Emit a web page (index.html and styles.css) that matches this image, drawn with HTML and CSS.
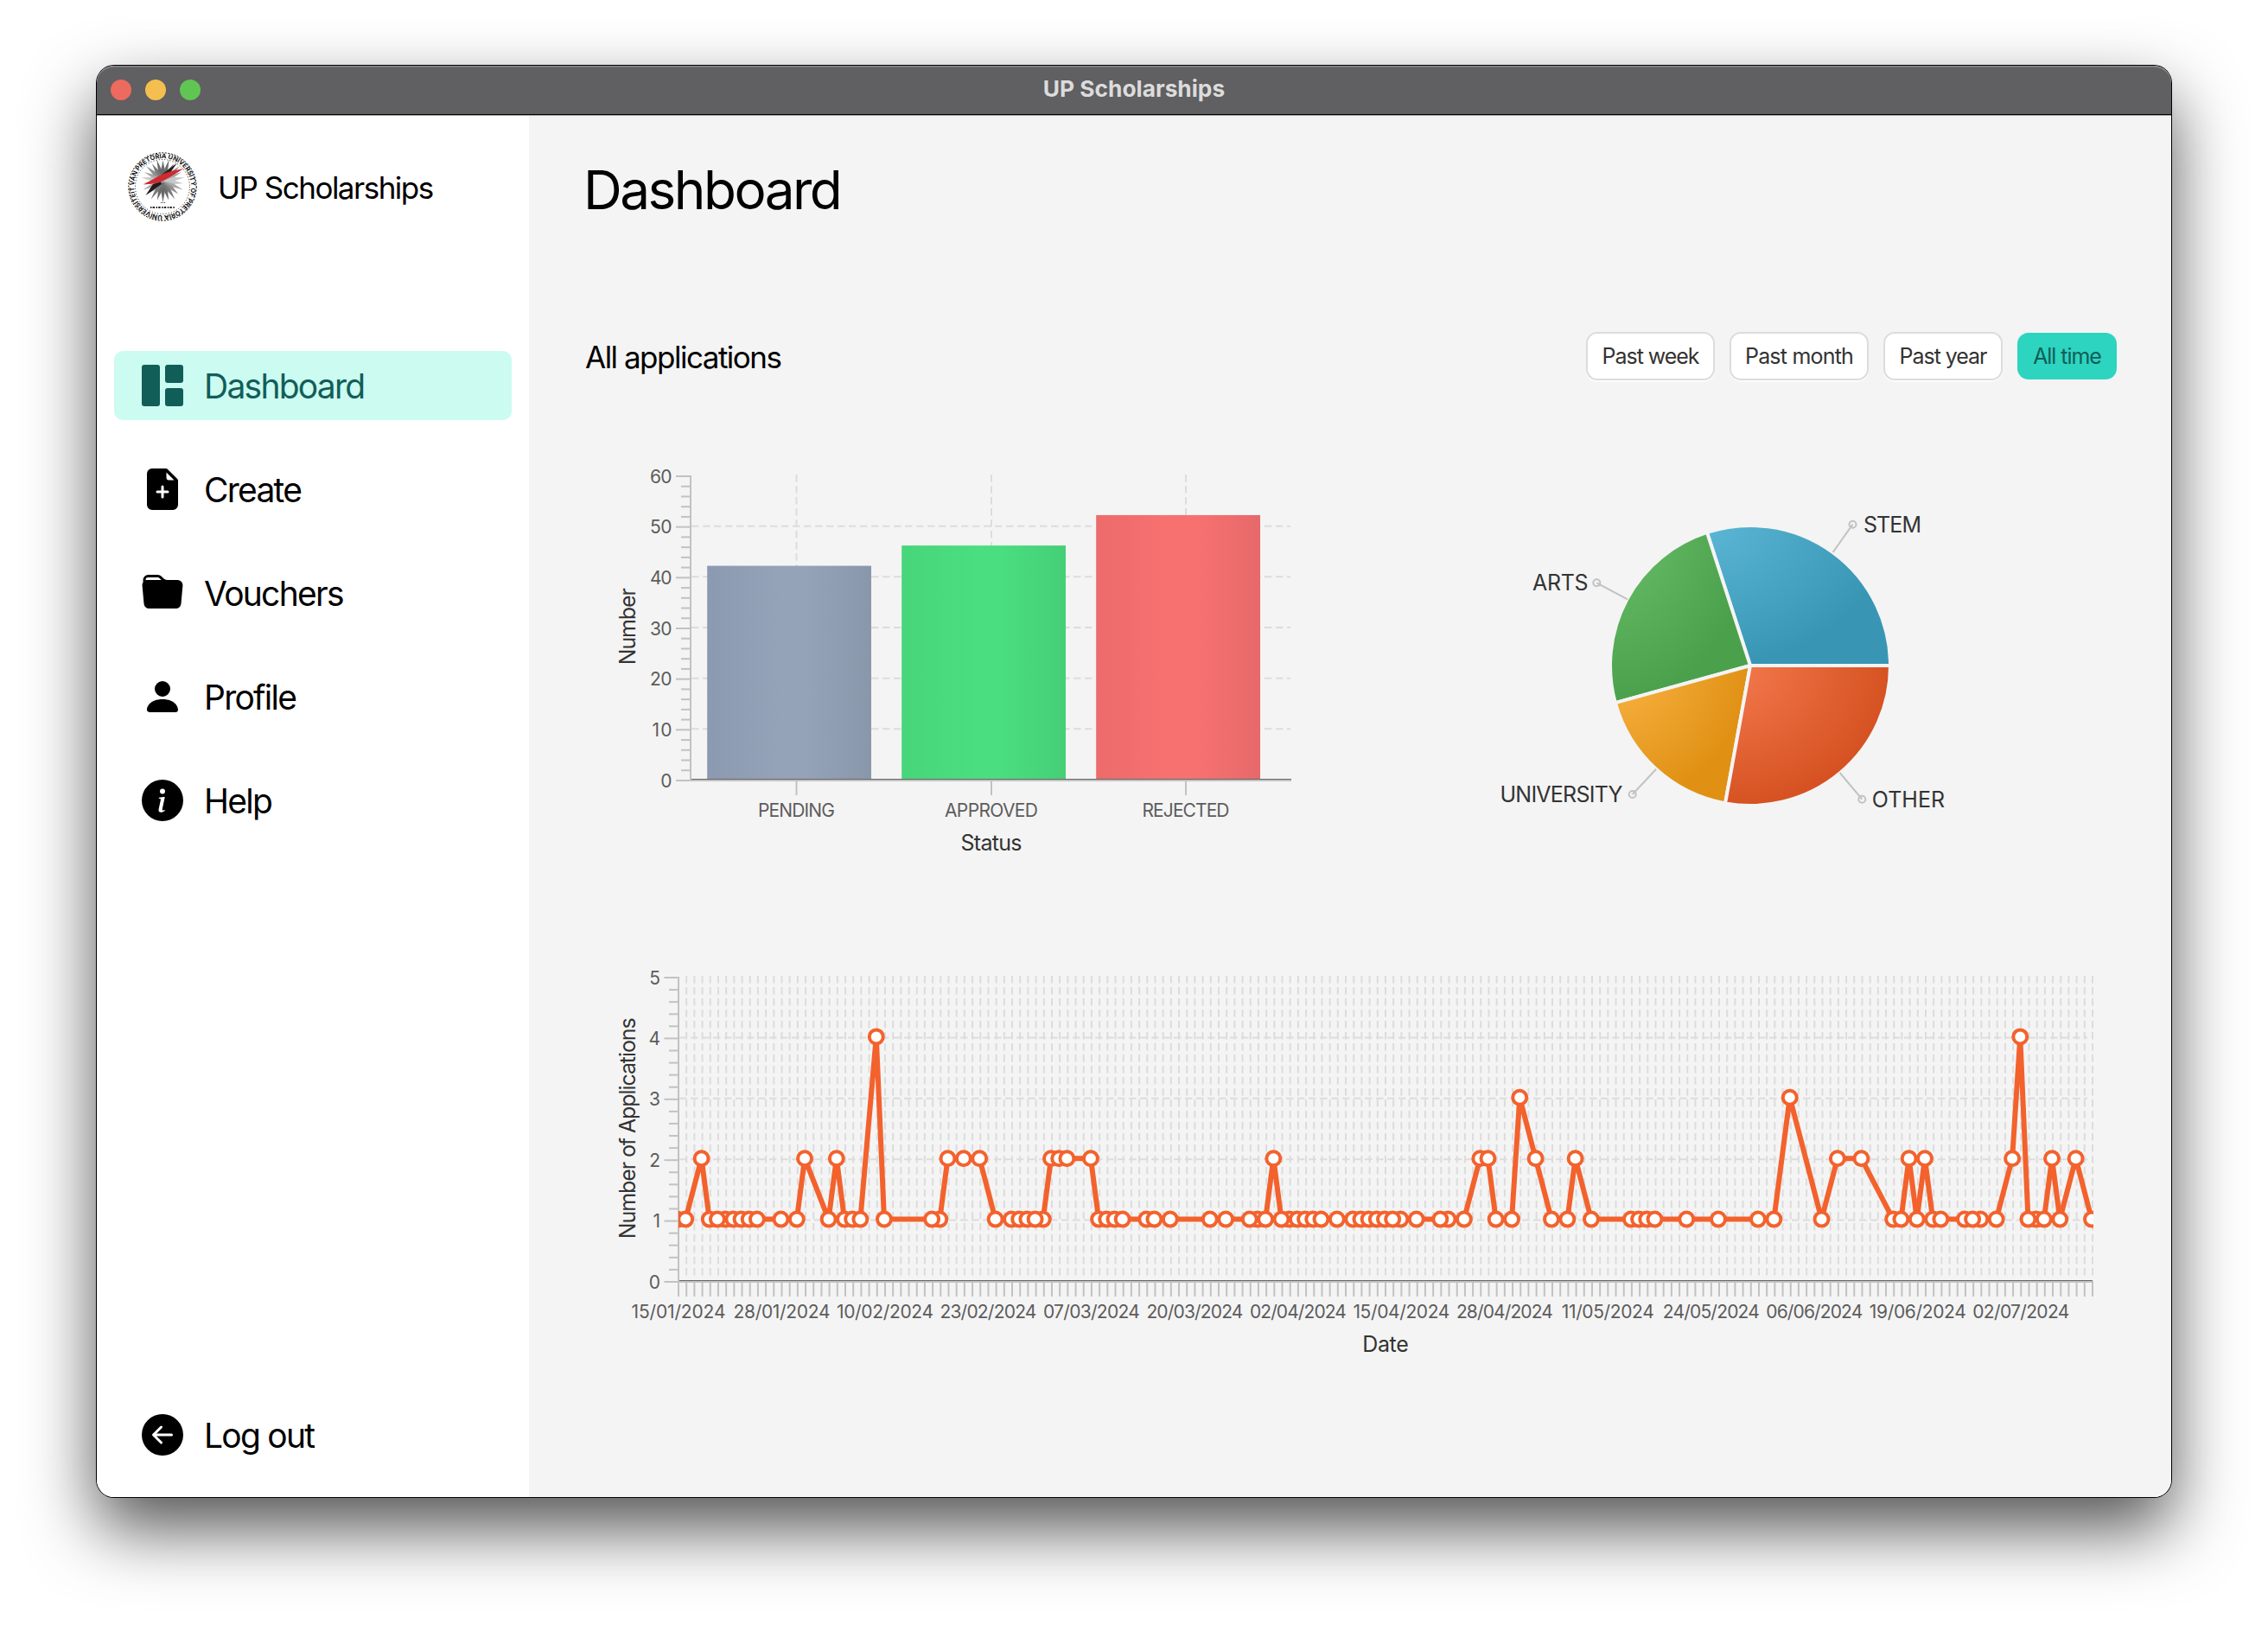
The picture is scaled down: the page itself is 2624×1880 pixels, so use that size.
FILE: index.html
```html
<!DOCTYPE html>
<html lang="en">
<head>
<meta charset="utf-8">
<title>UP Scholarships</title>
<link rel="stylesheet" href="styles.css">
</head>
<body>
<div class="window">
  <header class="titlebar">
    <div class="lights"><i class="light close"></i><i class="light minimise"></i><i class="light zoom"></i></div>
    <span class="window-title">UP Scholarships</span>
  </header>
  <div class="body">
    <aside class="sidebar">
      <div class="brand">
        <svg class="logo" viewBox="0 0 80 80" id="logo">
          <defs><path id="ring" d="M40 73A33 33 0 1 1 40.1 73"/></defs>
          <circle cx="40" cy="40" r="39.2" fill="none" stroke="#000" stroke-width="1" stroke-dasharray="2 1.6"/>
          <circle cx="40" cy="40" r="31.5" fill="none" stroke="#000" stroke-width=".9" stroke-dasharray="1 2.2"/>
          <text class="seal"><textPath href="#ring" textLength="205">UNIVERSITEIT VAN PRETORIA UNIVERSITY OF PRETORIA</textPath></text>
          <g id="rays"></g>
          <path fill="#231a1a" d="M57 12.500L48 25L40 28L39 26ZM20.500 50L29 37L38 34L39 37Z"/>
          <path fill="#cf2a30" d="M18 37.500L35 28Q44 22.500 64.500 19Q52 27 45 31Q37 36.500 18 37.500Z"/>
          <path stroke="#222" stroke-width="1.8" stroke-dasharray="1.4 1.2 2.4 1.6" d="M26 64H55"/>
          <path stroke="#333" stroke-width="1.2" stroke-dasharray="1 1" d="M38 58.500H44"/>
        </svg>
        <span class="brand-name">UP Scholarships</span>
      </div>
      <nav class="nav">
        <a class="item active"><svg class="icon" viewBox="0 0 16 16"><rect width="7" height="16" rx="1"/><rect x="9" width="7" height="7" rx="1"/><rect x="9" y="9" width="7" height="7" rx="1"/></svg>Dashboard</a>
        <a class="item"><svg class="icon" viewBox="0 0 16 16"><path d="M9.293 0H4a2 2 0 0 0-2 2v12a2 2 0 0 0 2 2h8a2 2 0 0 0 2-2V4.707A1 1 0 0 0 13.707 4L10 .293A1 1 0 0 0 9.293 0zM9.5 3.5v-2l3 3h-2a1 1 0 0 1-1-1zM8.5 7v1.5H10a.5.5 0 0 1 0 1H8.5V11a.5.5 0 0 1-1 0V9.5H6a.5.5 0 0 1 0-1h1.500V7a.5.5 0 0 1 1 0z"/></svg>Create</a>
        <a class="item"><svg class="icon" viewBox="0 0 16 16"><path d="M9.828 3h3.982a2 2 0 0 1 1.992 2.181l-.637 7A2 2 0 0 1 13.174 14H2.825a2 2 0 0 1-1.991-1.819l-.637-7a1.990 1.990 0 0 1 .342-1.310L.5 3a2 2 0 0 1 2-2h3.672a2 2 0 0 1 1.414.586l.828.828A2 2 0 0 0 9.828 3zm-8.322.12C1.720 3.042 1.950 3 2.190 3h5.396l-.707-.707A1 1 0 0 0 6.172 2H2.500a1 1 0 0 0-1 .981l.006.139z"/></svg>Vouchers</a>
        <a class="item"><svg class="icon" viewBox="0 0 16 16"><path d="M3 14s-1 0-1-1 1-4 6-4 6 3 6 4-1 1-1 1H3zm5-6a3 3 0 1 0 0-6 3 3 0 0 0 0 6z"/></svg>Profile</a>
        <a class="item"><svg class="icon" viewBox="0 0 16 16"><path d="M8 16A8 8 0 1 0 8 0a8 8 0 0 0 0 16zm.93-9.412-1 4.705c-.07.34.029.533.304.533.194 0 .487-.07.686-.246l-.088.416c-.287.346-.92.598-1.465.598-.703 0-1.002-.422-.808-1.319l.738-3.468c.064-.293.006-.399-.287-.47l-.451-.081.082-.381 2.290-.287zM8 5.500a1 1 0 1 1 0-2 1 1 0 0 1 0 2z"/></svg>Help</a>
      </nav>
      <a class="item logout"><svg class="icon" viewBox="0 0 16 16"><path d="M8 0a8 8 0 1 0 0 16A8 8 0 0 0 8 0zm3.500 7.500a.5.5 0 0 1 0 1H5.707l2.147 2.146a.5.5 0 0 1-.708.708l-3-3a.5.5 0 0 1 0-.708l3-3a.5.5 0 1 1 .708.708L5.707 7.500H11.500z"/></svg>Log out</a>
    </aside>
    <main class="main">
      <h1 class="page-title">Dashboard</h1>
      <div class="toolbar">
        <h2 class="section-title">All applications</h2>
        <div class="ranges">
          <button class="range week">Past week</button>
          <button class="range month">Past month</button>
          <button class="range year">Past year</button>
          <button class="range all">All time</button>
        </div>
      </div>
      <div class="charts">
        <svg class="bar-chart" id="bars" viewBox="700 530 820 480"></svg>
        <svg class="pie-chart" id="pie" viewBox="1720 530 550 480"></svg>
      </div>
      <svg class="line-chart" id="line" viewBox="700 1110 1760 480"></svg>
    </main>
  </div>
</div>
<script src="charts.js"></script>
</body>
</html>
```
FILE: styles.css
```css
* { box-sizing: border-box; }
html, body { margin: 0; }
body {
  width: 2624px;
  height: 1880px;
  padding: 76px 112px 0;
  overflow: hidden;
  background: #fff;
  font-family: Inter, "Liberation Sans", sans-serif;
  color: #000;
}
.window {
  display: flex;
  flex-direction: column;
  width: 2400px;
  height: 1656px;
  border-radius: 20px;
  background: #fff;
  box-shadow: 0 0 0 1px #000, 0 36px 80px rgba(0, 0, 0, .68);
}
.titlebar {
  display: grid;
  grid-template-columns: 1fr auto 1fr;
  align-items: center;
  height: 58px;
  padding: 0 16px 2px;
  border-radius: 20px 20px 0 0;
  background: #605f61;
  box-shadow: inset 0 2px 0 -0.5px #8b8b8c, inset 0 -1px 0 #a0a0a0, inset 0 -2px 0 #000;
}
.lights { display: flex; gap: 16px; }
.light { width: 24px; height: 24px; border-radius: 50%; }
.close { background: #ed6a5e; }
.minimise { background: #f5bf4f; }
.zoom { background: #61c554; }
.window-title { font-size: 26.3px; font-weight: 700; line-height: 52px; padding-bottom: 3px; color: #dcdcdc; }
.body { display: flex; flex: 1; }
.sidebar {
  display: flex;
  flex: none;
  flex-direction: column;
  width: 500px;
  padding: 42px 20px 32px;
  border-radius: 0 0 0 20px;
  background: #fff;
}
.brand { display: flex; align-items: center; gap: 24px; height: 80px; padding-left: 16px; }
.logo { width: 80px; height: 80px; }
.seal { font-size: 7.5px; font-weight: 700; fill: #111; }
.brand-name { padding-top: 1px; font-size: 35px; letter-spacing: -1.5px; }
.nav { display: flex; flex-direction: column; gap: 40px; margin-top: 150px; }
.item {
  display: flex;
  align-items: center;
  gap: 24px;
  height: 80px;
  padding-left: 32px;
  border-radius: 10px;
  font-size: 39px;
  letter-spacing: -1.75px;
}
.item.active { background: #ccfbf1; color: #115e59; }
.icon { width: 48px; height: 48px; fill: currentColor; }
.logout { margin-top: auto; }
.main {
  flex: 1;
  min-width: 0;
  padding: 46px 63px 0 63px;
  border-radius: 0 0 20px 0;
  background: #f4f4f4;
}
.page-title { margin: 0; font-size: 62px; font-weight: 400; line-height: 80px; letter-spacing: -2.5px; }
.toolbar { display: flex; align-items: center; justify-content: space-between; height: 56px; margin-top: 124px; }
.section-title { margin: 2px 0 0 2px; font-size: 35px; font-weight: 400; letter-spacing: -1.5px; }
.ranges { display: flex; align-items: center; gap: 17px; }
.range {
  height: 56px;
  padding: 0;
  border: 2px solid #dcdcdc;
  border-radius: 13px;
  background: #fff;
  box-shadow: 0 2px 0 #fcfcfc;
  font-family: inherit;
  font-size: 25px;
  letter-spacing: -1.05px;
  color: #333;
}
.week { width: 149px; }
.month { width: 161px; letter-spacing: -.8px; }
.year { width: 138px; }
.all { width: 115px; height: 54px; border: 0; background: #2dd4bf; box-shadow: none; color: #115e59; }
.charts { display: flex; gap: 200px; margin-top: 90px; padding-left: 25px; }
.bar-chart { flex: none; width: 820px; height: 480px; }
.pie-chart { flex: none; width: 550px; height: 480px; }
.line-chart { display: block; width: 1760px; height: 480px; margin: 100px 0 0 25px; }
.tick { font-size: 21px; fill: #5c5c5c; }
.label { font-size: 25px; fill: #333; }
.grid { stroke: #dcdcdc; stroke-width: 2; stroke-linecap: square; stroke-dasharray: 6.5 6.5; }
.axis { stroke: #c2c2c2; stroke-width: 2; }
.zero { stroke: #666; stroke-width: 1; }
.series { fill: none; stroke: #f3622d; stroke-width: 6; stroke-linejoin: bevel; }
.point { fill: #fff; stroke: #f3622d; stroke-width: 4; }
.slice { stroke: #f4f4f4; stroke-width: 4; stroke-linejoin: round; }
.leader { fill: none; stroke: #c2c2c2; stroke-width: 2; }
```
FILE: charts.js
```javascript
const line = (x1, y1, x2, y2, c) => `<line class="${c}" x1="${x1}" y1="${y1}" x2="${x2}" y2="${y2}"/>`;
const text = (x, y, s, c, anchor, len, extra = '') =>
  `<text class="${c}" x="${x}" y="${y}" text-anchor="${anchor}" textLength="${len}" ${extra}>${s}</text>`;
const HEIGHT = 352;

// Logo rays, darker towards the vertical
let rays = '';
for (let k = 0; k < 22; k++) {
  const a = (k + .5) * Math.PI * 2 / 22, v = Math.abs(Math.sin(a));
  const g = Math.round(215 - 110 * v), r = k % 2 ? 25.5 : 23.5;
  const p = (rad, ang) => (40.5 + rad * Math.cos(ang)).toFixed(1) + ' ' + (33 + rad * Math.sin(ang)).toFixed(1);
  rays += `<path fill="rgb(${g},${g},${g})" d="M40.5 33L${p(13, a - .16)}L${p(r, a)}L${p(13, a + .16)}Z"/>`;
}
document.getElementById('rays').innerHTML = rays;

function valueAxis(x, top, max, step, major, minor, right, textRight) {
  let s = '';
  const n = max / step * 5;
  for (let k = 0; k <= n; k++) {
    const y = top + HEIGHT - k * HEIGHT / n;
    const isMajor = k % 5 === 0;
    s += line(isMajor ? major : minor, y, x, y, 'axis');
    if (isMajor) {
      const v = k / 5 * step;
      if (k && k < n) s = line(x + 2, y - 1, right, y - 1, 'grid') + s;
      s += text(textRight, y + 7.6, v, 'tick', 'end', v === 10 ? 23 : v > 9 ? 25.5 : 12.7);
    }
  }
  return s + line(x, top - 1, x, top + HEIGHT + 1, 'axis');
}

// Applications by status
{
  const top = 551, base = top + HEIGHT;
  let s = '<defs>';
  const bars = [
    ['PENDING', 42, 818.2, 921.5, 89, ['#8b9ab0', '#94a3b8', '#8997ab']],
    ['APPROVED', 46, 1043.2, 1147, 108, ['#47d679', '#4ade80', '#45cf76']],
    ['REJECTED', 52, 1268.2, 1372, 101, ['#ed6b6b', '#f87171', '#e66969']]
  ];
  bars.forEach((b, i) => s += `<linearGradient id="b${i}"><stop stop-color="${b[5][0]}"/><stop offset=".45" stop-color="${b[5][1]}"/><stop offset=".6" stop-color="${b[5][1]}"/><stop offset="1" stop-color="${b[5][2]}"/></linearGradient>`);
  s += '</defs>';
  bars.forEach(b => s += line(b[3], 550, b[3], base - 2, 'grid') + line(b[3], base, b[3], 920, 'axis'));
  s += valueAxis(799, top, 60, 10, 782, 788, 1492, 777.5);
  bars.forEach((b, i) => {
    const y = base - 2 - b[1] * HEIGHT / 60;
    s += `<rect x="${b[2]}" y="${y}" width="189.8" height="${base - y}" fill="url(#b${i})"/>`;
    s += text(b[3], 945, b[0], 'tick', 'middle', b[4]);
  });
  s += line(800, base, 1494, base, 'axis') + line(800, base - 1.5, 1494, base - 1.5, 'zero');
  s += text(1147, 984, 'Status', 'label', 'middle', 71);
  s += text(0, 0, 'Number', 'label', 'middle', 89, 'transform="translate(734.5 724.7) rotate(-90)"');
  document.getElementById('bars').innerHTML = s;
}

// Applications by field
{
  const cx = 2025, cy = 770, r = 162, total = 140;
  const slices = [
    [42, '#5cb6d6', '#3896b4'], [34, '#6abf6a', '#4ba14b'],
    [25, '#fab445', '#e09114'], [39, '#f57b50', '#d65222']
  ];
  let s = '', defs = '', a = 0;
  slices.forEach(([v, c1, c2], i) => {
    const b = a + v / total * Math.PI * 2;
    const p = t => (cx + r * Math.cos(t)).toFixed(2) + ' ' + (cy - r * Math.sin(t)).toFixed(2);
    defs += `<radialGradient id="p${i}" cx="0" cy="0" r="1"><stop stop-color="${c1}"/><stop offset="1" stop-color="${c2}"/></radialGradient>`;
    s += `<path class="slice" fill="url(#p${i})" d="M${cx} ${cy}L${p(a)}A${r} ${r} 0 0 0 ${p(b)}Z"/>`;
    a = b;
  });
  const labels = [
    ['STEM', 2156, 615.8, 67, 2143.5, 606.7, 2120.6, 639],
    ['ARTS', 1773, 683, 64.5, 1847.3, 674.3, 1883, 693.3],
    ['UNIVERSITY', 1735.5, 928, 142, 1888.7, 919, 1916.2, 889.7],
    ['OTHER', 2165.7, 933.8, 84.5, 2154.3, 924.7, 2128.6, 894]
  ];
  labels.forEach(l => {
    s += text(l[1], l[2], l[0], 'label', 'start', l[3]);
    s += `<circle class="leader" cx="${l[4]}" cy="${l[5]}" r="4"/>` + line(l[4], l[5], l[6], l[7], 'leader');
  });
  document.getElementById('pie').innerHTML = '<defs>' + defs + '</defs>' + s;
}

// Applications per day, as day index and count
{
  const top = 1131, base = top + HEIGHT, x0 = 785, step = 1636 / 178;
  const high = { 3: 2, 16: 2, 20: 2, 25: 4, 34: 2, 36: 2, 38: 2, 47: 2, 48: 2, 49: 2, 52: 2, 75: 2, 101: 2, 102: 2, 106: 3, 108: 2, 113: 2, 140: 3, 146: 2, 149: 2, 155: 2, 157: 2, 168: 2, 169: 4, 173: 2, 176: 2 };
  const days = [0, 1, 3, 4, 5, 6, 7, 8, 9, 10, 13, 15, 16, 19, 20, 21, 22, 23, 25, 26, 32, 33, 34, 36, 38, 40, 42, 43, 44, 45, 46, 47, 48, 49, 52, 53, 54, 55, 56, 59, 60, 62, 67, 69, 72, 73, 74, 75, 76, 77, 78, 79, 80, 81, 83, 85, 86, 87, 88, 89, 90, 91, 93, 96, 97, 99, 101, 102, 103, 105, 106, 108, 110, 112, 113, 115, 120, 121, 122, 123, 127, 131, 136, 138, 140, 144, 146, 149, 153, 154, 155, 156, 157, 158, 159, 162, 163, 164, 166, 168, 169, 170, 171, 172, 173, 174, 176, 178];
  const behind = [6, 33, 46, 73, 77, 91, 97, 164, 171];
  const px = d => (x0 - 1 + d * step).toFixed(2);
  const py = d => (base - 2 - (high[d] || 1) * HEIGHT / 5).toFixed(2);
  let s = '<defs><clipPath id="plot"><rect x="785" y="1120" width="1637" height="365"/></clipPath></defs>';
  for (let k = 0; k <= 178; k++) {
    const x = (x0 + k * step).toFixed(2);
    if (k) s += line(x, top - 1, x, base - 2, 'grid');
    s += line(x, base, x, 1500, 'axis');
  }
  s += valueAxis(x0, top, 5, 1, 768.5, 774, 2414, 764);
  s += line(x0 + 1, base, 2422, base, 'axis') + line(x0 + 1, base - 1.5, 2421, base - 1.5, 'zero');
  s += '<g clip-path="url(#plot)"><polyline class="series" points="' + days.map(d => px(d) + ',' + py(d)).join(' ') + '"/>';
  [...behind, ...days.filter(d => !behind.includes(d))].forEach(d => s += `<circle class="point" cx="${px(d)}" cy="${py(d)}" r="8"/>`);
  s += '</g>';
  ['15/01', '28/01', '10/02', '23/02', '07/03', '20/03', '02/04', '15/04', '28/04', '11/05', '24/05', '06/06', '19/06', '02/07'].forEach((t, i) =>
    s += text((x0 + i * 13 * step).toFixed(1), 1525, t + '/2024', 'tick', 'middle', t === '11/05' ? 107 : i ? 112 : 109));
  s += text(1603, 1564, 'Date', 'label', 'middle', 53.5);
  s += text(0, 0, 'Number of Applications', 'label', 'middle', 256, 'transform="translate(734.5 1305.3) rotate(-90)"');
  document.getElementById('line').innerHTML = s;
}
```
